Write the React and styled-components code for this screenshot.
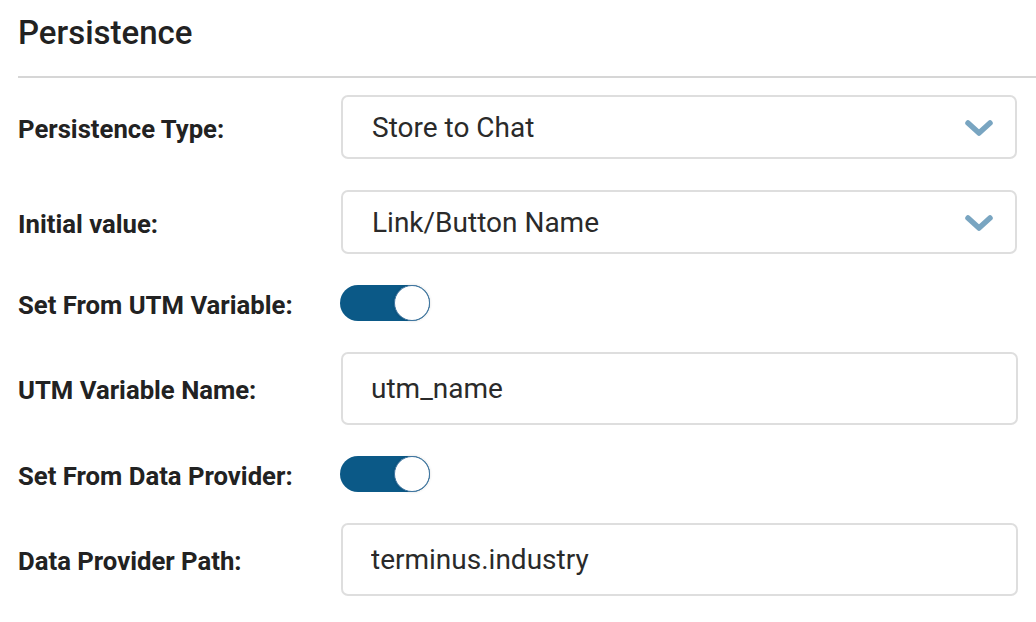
import styled, { createGlobalStyle } from "styled-components";

const GlobalStyle = createGlobalStyle`
  * {
    box-sizing: border-box;
  }
  body {
    margin: 0;
    background: #ffffff;
    font-family: Roboto, "Liberation Sans", Arial, sans-serif;
    color: #222222;
  }
`;

const fields = [
  { label: "Persistence Type:", kind: "select", value: "Store to Chat" },
  { label: "Initial value:", kind: "select", value: "Link/Button Name" },
  { label: "Set From UTM Variable:", kind: "toggle", value: true },
  { label: "UTM Variable Name:", kind: "input", value: "utm_name" },
  { label: "Set From Data Provider:", kind: "toggle", value: true },
  { label: "Data Provider Path:", kind: "input", value: "terminus.industry" },
];

const Chevron = () => (
  <svg width="30" height="18" viewBox="0 0 30 18" aria-hidden="true">
    <polyline
      points="4,4 15,14 26,4"
      fill="none"
      stroke="#79a5c1"
      strokeWidth="5.5"
      strokeLinecap="round"
      strokeLinejoin="round"
    />
  </svg>
);

const Field = ({ kind, value }) => {
  if (kind === "select") {
    return (
      <Select>
        <span>{value}</span>
        <Chevron />
      </Select>
    );
  }
  if (kind === "toggle") {
    return (
      <Toggle role="switch" aria-checked={value} $on={value}>
        <Knob />
      </Toggle>
    );
  }
  return <TextInput type="text" defaultValue={value} />;
};

const App = () => {
  return (
    <>
      <GlobalStyle />
      <Panel>
        <Header>
          <h2>Persistence</h2>
        </Header>
        <Form>
          {fields.map((f) => (
            <Row key={f.label}>
              <Label>{f.label}</Label>
              <Control>
                <Field kind={f.kind} value={f.value} />
              </Control>
            </Row>
          ))}
        </Form>
      </Panel>
    </>
  );
};

const Panel = styled.div`
  padding-left: 18px;
`;

const Header = styled.div`
  padding-top: 13px;
  padding-bottom: 24px;
  border-bottom: 2px solid #d6d6d6;

  h2 {
    margin: 0;
    font-size: 33px;
    line-height: 39px;
    font-weight: 500;
    color: #222222;
  }
`;

const Form = styled.div`
  display: flex;
  flex-direction: column;
  gap: 31px;
  padding: 17px 18px 0 0;
`;

const Row = styled.div`
  display: flex;
  align-items: center;
`;

const Label = styled.div`
  flex: 0 0 323px;
  padding-top: 3px;
  font-size: 25.7px;
  font-weight: 700;
  color: #222222;
`;

const Control = styled.div`
  flex: 1;
  display: flex;
`;

const Select = styled.div`
  flex: 1;
  height: 64px;
  margin-right: 1px;
  display: flex;
  align-items: center;
  justify-content: space-between;
  padding: 0 21px 0 29px;
  border: 2px solid #dedede;
  border-radius: 7px;
  font-size: 28px;
  color: #2a2a2a;

  svg {
    margin-top: 2px;
  }
`;

const TextInput = styled.input`
  flex: 1;
  height: 73px;
  padding: 0 28px;
  border: 2px solid #dedede;
  border-radius: 7px;
  font-family: inherit;
  font-size: 28px;
  color: #2a2a2a;
  background: #ffffff;
  outline: none;
`;

const Toggle = styled.div`
  width: 90px;
  height: 36px;
  margin-left: -1px;
  border-radius: 18px;
  background: ${(p) => (p.$on ? "#0b5987" : "#cccccc")};
  display: flex;
  justify-content: ${(p) => (p.$on ? "flex-end" : "flex-start")};
`;

const Knob = styled.span`
  width: 36px;
  height: 36px;
  border-radius: 50%;
  background: #ffffff;
  border: 1px solid #3d74a0;
  box-shadow: 0 0 3px rgba(0, 0, 0, 0.15);
`;

export default App;
